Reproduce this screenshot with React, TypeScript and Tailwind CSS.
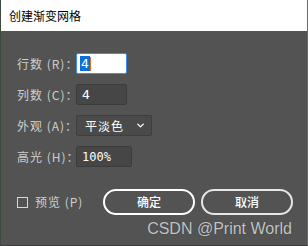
import { ChevronDown } from "lucide-react";

const cjk = { fontFamily: '"Noto Sans CJK SC", sans-serif' };

const Label = ({ text }: { text: string }) => (
    <span className="w-[59px] text-[12px] tracking-[1px] text-[#cfcfcf] whitespace-nowrap" style={cjk}>
        {text}
    </span>
);

export default function App() {
    return (
        <div className="w-[308px] h-[246px] flex flex-col bg-[#535353] border-l border-[#3e4a3e] border-r border-r-[#6a6a6a] border-b border-b-[#3c3c3c]">
            <div className="h-[31px] shrink-0 bg-white flex items-center pl-[8px]">
                <span className="text-[12px] text-black leading-none" style={cjk}>
                    创建渐变网格
                </span>
            </div>

            <div className="flex flex-col gap-[10px] pl-[16px] pt-[22px]">
                <div className="flex items-center">
                    <Label text="行数 (R)：" />
                    <div className="w-[51px] h-[21px] bg-white border border-[#3d8ee8] rounded-[2px] flex items-center pl-[3px]">
                        <span className="bg-[#0a6fd8] text-white text-[13px] leading-[15px] px-[1px]" style={{ fontFamily: '"DejaVu Sans Mono", monospace' }}>
                            4
                        </span>
                        <span className="w-px h-[14px] bg-[#e0702a]" />
                    </div>
                </div>
                <div className="flex items-center">
                    <Label text="列数 (C)：" />
                    <div className="w-[51px] h-[21px] bg-[#464646] border border-[#3b3b3b] rounded-[2px] flex items-center pl-[5px] text-white text-[13px]" style={{ fontFamily: '"DejaVu Sans Mono", monospace' }}>
                        4
                    </div>
                </div>
                <div className="flex items-center">
                    <Label text="外观 (A)：" />
                    <div className="w-[76px] h-[21px] bg-[#4a4a4a] border border-[#3e3e3e] rounded-[2px] flex items-center justify-between pl-[8px] pr-[5px] text-white text-[12px] tracking-[1px]" style={cjk}>
                        <span>平淡色</span>
                        <ChevronDown size={11} strokeWidth={3} className="text-white" />
                    </div>
                </div>
                <div className="flex items-center">
                    <Label text="高光 (H)：" />
                    <div className="w-[56px] h-[21px] bg-[#464646] border border-[#3b3b3b] rounded-[2px] flex items-center pl-[5px] text-white text-[12px]" style={{ fontFamily: '"DejaVu Sans Mono", monospace' }}>
                        100%
                    </div>
                </div>
            </div>

            <div className="flex items-center pl-[16px] pt-[22px]">
                <div className="flex items-center gap-[7px] w-[86px]">
                    <span className="w-[11px] h-[11px] border border-[#d8d8d8]" />
                    <span className="text-[12px] tracking-[1px] text-[#cfcfcf] whitespace-nowrap" style={cjk}>
                        预览 (P)
                    </span>
                </div>
                <div className="flex gap-[6px]">
                    <button className="w-[92px] h-[26px] rounded-full border-2 border-white text-white text-[12px] font-medium" style={cjk}>
                        确定
                    </button>
                    <button className="w-[92px] h-[26px] rounded-full border-2 border-[#e6e6e6] text-white text-[12px] font-medium" style={cjk}>
                        取消
                    </button>
                </div>
            </div>

            <div className="flex justify-end pr-[15px] mt-[4px]">
                <span className="text-[16px] text-[#c4c4c4] leading-[20px]" style={{ fontFamily: '"Liberation Sans", Arial, sans-serif', textShadow: "0 0 1px #333" }}>
                    CSDN @Print World
                </span>
            </div>
        </div>
    );
}
